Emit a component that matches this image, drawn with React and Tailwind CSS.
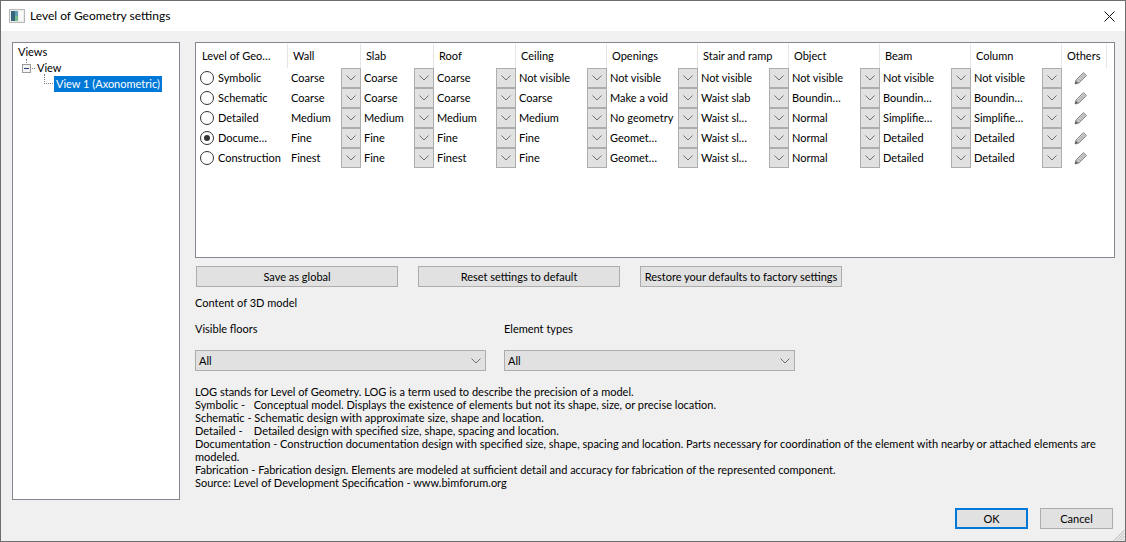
const FONT = "font-['Lato','Open_Sans',sans-serif]";

const cols = [
  { label: "Wall", w: "w-[73px]" },
  { label: "Slab", w: "w-[73px]" },
  { label: "Roof", w: "w-[82px]" },
  { label: "Ceiling", w: "w-[91px]" },
  { label: "Openings", w: "w-[91px]" },
  { label: "Stair and ramp", w: "w-[91px]" },
  { label: "Object", w: "w-[91px]" },
  { label: "Beam", w: "w-[91px]" },
  { label: "Column", w: "w-[91px]" },
];

const rows = [
  { name: "Symbolic", vals: ["Coarse", "Coarse", "Coarse", "Not visible", "Not visible", "Not visible", "Not visible", "Not visible", "Not visible"] },
  { name: "Schematic", vals: ["Coarse", "Coarse", "Coarse", "Coarse", "Make a void", "Waist slab", "Boundin…", "Boundin…", "Boundin…"] },
  { name: "Detailed", vals: ["Medium", "Medium", "Medium", "Medium", "No geometry", "Waist sl…", "Normal", "Simplifie…", "Simplifie…"] },
  { name: "Docume…", checked: true, vals: ["Fine", "Fine", "Fine", "Fine", "Geomet…", "Waist sl…", "Normal", "Detailed", "Detailed"] },
  { name: "Construction", vals: ["Finest", "Fine", "Finest", "Fine", "Geomet…", "Waist sl…", "Normal", "Detailed", "Detailed"] },
];

const notes = [
  "LOG stands for Level of Geometry. LOG is a term used to describe the precision of a model.",
  "Symbolic -   Conceptual model. Displays the existence of elements but not its shape, size, or precise location.",
  "Schematic - Schematic design with approximate size, shape and location.",
  "Detailed -    Detailed design with specified size, shape, spacing and location.",
  "Documentation - Construction documentation design with specified size, shape, spacing and location. Parts necessary for coordination of the element with nearby or attached elements are modeled.",
  "Fabrication - Fabrication design. Elements are modeled at sufficient detail and accuracy for fabrication of the represented component.",
  "Source: Level of Development Specification - www.bimforum.org",
];

function Chevron() {
  return (
    <svg width="10" height="6" viewBox="0 0 10 6" className="shrink-0">
      <path d="M0.5 0.5 L5 5 L9.5 0.5" fill="none" stroke="#707070" strokeWidth="1" />
    </svg>
  );
}

function Pencil() {
  return (
    <svg width="14" height="14" viewBox="0 0 14 14">
      <path d="M1 13 L2 9 L9.5 1.5 L12.5 4.5 L5 12 Z" fill="#d0d0d0" stroke="#8c8c8c" strokeWidth="1" strokeLinejoin="round" />
      <path d="M3 9.5 L5 11.5 M4.5 8 L6.5 10 M6 6.5 L8 8.5 M7.5 5 L9.5 7 M9 3.5 L11 5.5" stroke="#8c8c8c" strokeWidth="0.8" />
      <path d="M1 13 L2 10 L4 12 Z" fill="#555555" />
    </svg>
  );
}

function Radio({ checked }) {
  return (
    <span className="flex h-[14px] w-[14px] shrink-0 items-center justify-center rounded-full border border-[#333333] bg-white">
      {checked && <span className="h-[6px] w-[6px] rounded-full bg-[#333333]" />}
    </span>
  );
}

function Button({ children, className = "" }) {
  return (
    <button className={`flex h-[21px] items-center justify-center whitespace-nowrap border border-[#adadad] bg-[#e1e1e1] text-black ${className}`}>
      {children}
    </button>
  );
}

function Select({ className = "" }) {
  return (
    <div className={`flex h-[21px] items-center justify-between border border-[#adadad] bg-[#e1e1e1] pl-[3px] pr-[4px] ${className}`}>
      <span>All</span>
      <Chevron />
    </div>
  );
}

function TreeView() {
  return (
    <div className="h-[458px] w-[168px] shrink-0 border border-[#828790] bg-white pl-[5px] pt-[1px] leading-[16px]">
      <div>Views</div>
      <div className="flex h-[16px] items-center pl-[4px]">
        <span className="relative flex h-[9px] w-[9px] items-center justify-center border border-[#9a9a9a] bg-[#f4f4f4]">
          <span className="absolute left-[3px] top-[-6px] h-[4px] border-l border-dotted border-[#808080]" />
          <span className="h-px w-[5px] bg-[#1f3f80]" />
        </span>
        <span className="ml-[1px] w-[3px] border-t border-dotted border-[#808080]" />
        <span className="ml-[2px]">View</span>
      </div>
      <div className="flex h-[16px] items-center pl-[26px]">
        <span className="h-[10px] w-[9px] -translate-y-[5px] border-b border-l border-dotted border-[#808080]" />
        <span className="ml-[1px] bg-[#0078d7] px-[2px] leading-[16px] text-white">View 1 (Axonometric)</span>
      </div>
    </div>
  );
}

function LevelTable() {
  return (
    <div className="h-[216px] w-[920px] border border-[#828790] bg-white pt-px">
      <div className="flex h-[24px] items-stretch">
        <div className="flex w-[92px] items-center border-r border-[#e5e5e5] pl-[6px]">Level of Geo…</div>
        {cols.map((c) => (
          <div key={c.label} className={`flex ${c.w} items-center whitespace-nowrap border-r border-[#e5e5e5] pl-[5px]`}>
            {c.label}
          </div>
        ))}
        <div className="flex w-[45px] items-center border-r border-[#e5e5e5] pl-[5px]">Others</div>
      </div>
      {rows.map((r) => (
        <div key={r.name} className="flex h-[20px] items-center">
          <div className="flex w-[92px] items-center gap-[4px] whitespace-nowrap pl-[4px]">
            <Radio checked={r.checked} />
            <span>{r.name}</span>
          </div>
          {r.vals.map((v, i) => (
            <div key={i} className={`flex h-[20px] ${cols[i].w} items-center justify-between whitespace-nowrap pl-[3px]`}>
              <span>{v}</span>
              <span className="flex h-[20px] w-[20px] items-center justify-center border border-[#adadad] bg-[#e1e1e1]">
                <Chevron />
              </span>
            </div>
          ))}
          <div className="flex w-[45px] justify-center pr-[7px]">
            <Pencil />
          </div>
        </div>
      ))}
    </div>
  );
}

export default function App() {
  return (
    <div className={`relative flex h-[542px] w-[1126px] flex-col overflow-hidden border border-[#6e6e6e] bg-[#f0f0f0] text-[11px] leading-[16px] text-black ${FONT}`}>
      <header className="flex h-[30px] shrink-0 items-center justify-between bg-white pl-[8px] pr-[10px]">
        <div className="flex items-center gap-[5px]">
          <svg width="16" height="14" viewBox="0 0 16 14">
            <rect x="0.5" y="0.5" width="15" height="13" fill="#ececec" stroke="#b8b8b8" />
            <rect x="2" y="2" width="4" height="10" fill="#35667a" />
            <rect x="6" y="2" width="3" height="5" fill="#5f9fb0" />
            <rect x="6" y="7" width="3" height="5" fill="#74b88a" />
            <rect x="10" y="2" width="4" height="10" fill="#f8f8f8" />
          </svg>
          <span className="text-[12px] leading-[18px]">Level of Geometry settings</span>
        </div>
        <svg width="11" height="11" viewBox="0 0 11 11">
          <path d="M0.5 0.5 L10.5 10.5 M10.5 0.5 L0.5 10.5" stroke="#111" strokeWidth="1" />
        </svg>
      </header>

      <main className="flex min-h-0 flex-1 gap-[15px] pl-[11px] pt-[11px]">
        <TreeView />
        <section className="flex w-[920px] flex-col">
          <LevelTable />
          <div className="mt-[8px] flex gap-[20px] pl-px">
            <Button className="w-[202px]">Save as global</Button>
            <Button className="w-[202px]">Reset settings to default</Button>
            <Button className="w-[202px]">Restore your defaults to factory settings</Button>
          </div>
          <p className="mt-[8px]">Content of 3D model</p>
          <div className="mt-[10px] flex gap-[18px]">
            <div className="w-[291px]">
              <p>Visible floors</p>
              <Select className="mt-[13px]" />
            </div>
            <div className="w-[291px]">
              <p>Element types</p>
              <Select className="mt-[13px]" />
            </div>
          </div>
          <div className="mt-[14px] w-[915px] leading-[13px]">
            {notes.map((n) => (
              <p key={n} className="whitespace-pre-wrap">{n}</p>
            ))}
          </div>
          <div className="mt-[19px] flex justify-end gap-[12px] pr-[2px]">
            <button className="flex h-[21px] w-[73px] items-center justify-center border-2 border-[#0078d7] bg-[#e1e1e1]">OK</button>
            <Button className="w-[73px]">Cancel</Button>
          </div>
        </section>
      </main>
      <svg width="12" height="12" viewBox="0 0 12 12" className="absolute bottom-0 right-0">
        <path d="M11.5 1 L1 11.5 M11.5 4 L4 11.5 M11.5 7 L7 11.5 M11.5 10 L10 11.5" stroke="#b0b0b0" strokeWidth="1" />
      </svg>
    </div>
  );
}
